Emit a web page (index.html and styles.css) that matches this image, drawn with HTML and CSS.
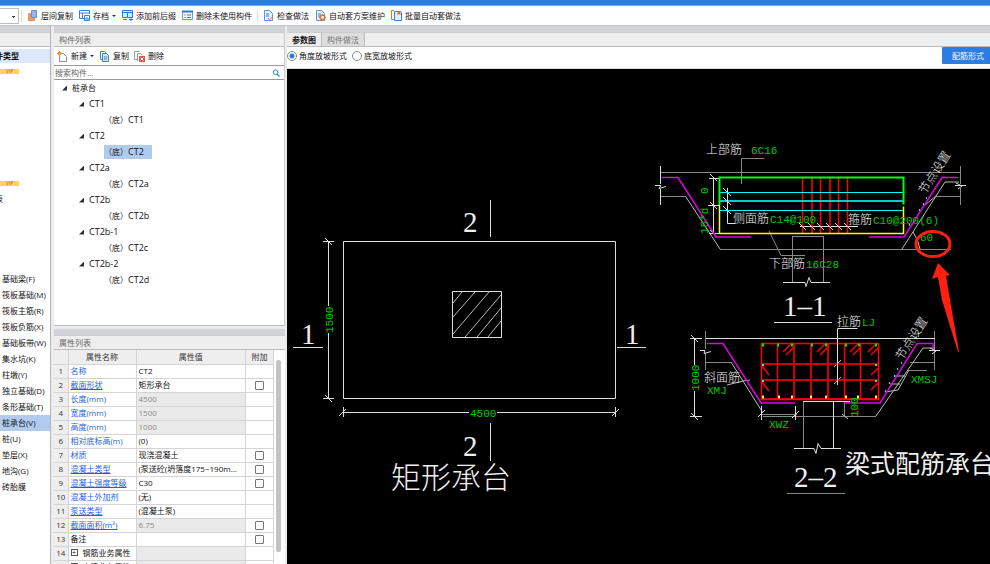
FILE: index.html
```html
<!DOCTYPE html>
<html lang="zh-CN">
<head>
<meta charset="utf-8">
<title>构件参数</title>
<link rel="stylesheet" href="styles.css">
</head>
<body>
<div class="titlebar"></div>
<header class="toolbar">
  <select class="floor" aria-label="楼层"><option></option></select>
  <span class="sep"></span>
  <button class="tool"><svg class="ico" viewBox="0 0 11 11"><path d="M4.500.5h5v7h-5z" fill="#8db9ee" stroke="#5b94d8"/><path d="M1.500 3.500h2v5h4v2h-6z" fill="#f39a5c" stroke="#f0904c"/></svg>层间复制</button>
  <button class="tool"><svg class="ico" viewBox="0 0 11 11"><path d="M5 8.500H.5v-8h10V4M.5 3h10M3.500 3v5.500" fill="none" stroke="#3a7fd0"/><path d="M5.500 5.500h5v5h-5zM7 10V8h2v2" fill="#fff" stroke="#3a7fd0"/></svg>存档<i class="caret"></i></button>
  <button class="tool"><svg class="ico" viewBox="0 0 11 11"><path d="M.5.5h10v7H.5zM.5 2.500h10M5.500 2.500v5" fill="#d6e8fc" stroke="#2f78cc"/><path d="M1 9.500h4M7 9.500h4M9 7.500v3.500" stroke="#2f78cc"/></svg>添加前后缀</button>
  <button class="tool"><svg class="ico" viewBox="0 0 11 11"><path d="M.5 1.500h10v8H.5z" fill="#e9f2fd" stroke="#6c9cd6"/><path d="M0 1.500h11" stroke="#2f78cc" stroke-width="2"/><path d="M2 5h2M2 7.500h2" stroke="#f08a3c"/><path d="M5 5h4M5 7.500h4" stroke="#3a7fd0"/></svg>删除未使用构件</button>
  <span class="sep"></span>
  <button class="tool"><svg class="ico" viewBox="0 0 11 11"><path d="M1.500.5h5l3 3v7h-8z" fill="#e4effc" stroke="#5b94d8"/><path d="M3 4h3M3 6h3" stroke="#3a7fd0"/><path d="M5 8l1.500 2L10 6" fill="none" stroke="#ec7c34"/></svg>检查做法</button>
  <button class="tool"><svg class="ico" viewBox="0 0 11 11"><path d="M1.500.5h5l3 3v7h-8z" fill="#e4effc" stroke="#5b94d8"/><path d="M3 4h3M3 6h2" stroke="#3a7fd0"/><circle cx="7.500" cy="7.500" r="2.200" fill="#fff" stroke="#ec6f24" stroke-width="1.500"/><path d="M7.500 4v1M7.500 10v1M4 7.500h1M10 7.500h1" stroke="#ec6f24"/></svg>自动套方案维护</button>
  <button class="tool"><svg class="ico" viewBox="0 0 11 11"><path d="M3 .5H.5v9H3" fill="none" stroke="#ec6f24"/><path d="M3.500 1.500h6l1 1v8h-7z" fill="#e4effc" stroke="#3a7fd0"/><path d="M6 3h4M8 1v4M6.500 1.500l3 3M9.500 1.500l-3 3" stroke="#ec6f24"/></svg>批量自动套做法</button>
</header>
<main class="work">
  <nav class="types">
    <div class="band"></div>
    <div class="head"></div>
    <div class="type-title"><span>构件类型</span></div>
    <div class="group group-a"><span class="vip">VIP</span></div>
    <div class="group group-b"><span class="vip">VIP</span></div>
    <div class="group group-c"><span class="cut">表</span></div>
    <ul class="type-list">
      <li><a href="#">基础梁(F)</a></li>
      <li><a href="#">筏板基础(M)</a></li>
      <li><a href="#">筏板主筋(R)</a></li>
      <li><a href="#">筏板负筋(X)</a></li>
      <li><a href="#">基础板带(W)</a></li>
      <li><a href="#">集水坑(K)</a></li>
      <li><a href="#">柱墩(Y)</a></li>
      <li><a href="#">独立基础(D)</a></li>
      <li><a href="#">条形基础(T)</a></li>
      <li><a href="#" class="on">桩承台(V)</a></li>
      <li><a href="#">桩(U)</a></li>
      <li><a href="#">垫层(X)</a></li>
      <li><a href="#">地沟(G)</a></li>
      <li><a href="#">砖胎膜</a></li>
    </ul>
  </nav>

  <div class="side">
    <section class="list-panel">
      <div class="band"></div>
      <h2 class="head">构件列表</h2>
      <div class="actions">
        <button class="tool"><svg class="ico" viewBox="0 0 11 11"><path d="M2.500 2.500h4l3 3v5h-7z" fill="#fff" stroke="#888"/><path d="M0 2.500h5M2.500 0v5M1 1l3 3M4 1L1 4" stroke="#f0903c"/></svg>新建<i class="caret"></i></button>
        <button class="tool"><svg class="ico" viewBox="0 0 11 11"><path d="M1.500.5h4l2 2v6h-6z" fill="#fff" stroke="#3a7fd0"/><path d="M3.500 2.500h4l2 2v6h-6z" fill="#d6e8fc" stroke="#3a7fd0"/><path d="M5 6h3M5 8h3" stroke="#3a7fd0"/></svg>复制</button>
        <button class="tool"><svg class="ico" viewBox="0 0 11 11"><path d="M3 8.500H.5v-8h5M3.500 10V2.500h3l2 2" fill="none" stroke="#999"/><path d="M5 5h6v6H5z" fill="#d8554c"/><path d="M6.500 6.500l3 3M9.500 6.500l-3 3" stroke="#fff"/></svg>删除</button>
      </div>
      <div class="search">
        <input type="text" placeholder="搜索构件..." aria-label="搜索构件">
        <button class="find" aria-label="搜索"><svg class="glass" viewBox="0 0 8 8"><circle cx="3.500" cy="3.200" r="2.300" fill="none" stroke="#2f8fc8"/><path d="M5 5l2.500 2.500" stroke="#2f8fc8" stroke-width="1.500"/></svg></button>
      </div>
      <ul class="tree">
        <li class="l1"><i class="tri"></i>桩承台</li>
        <li class="l2"><i class="tri"></i>CT1</li>
        <li class="l3"><span>（底）<b>CT1</b></span></li>
        <li class="l2"><i class="tri"></i>CT2</li>
        <li class="l3"><span class="on">（底）<b>CT2</b></span></li>
        <li class="l2"><i class="tri"></i>CT2a</li>
        <li class="l3"><span>（底）<b>CT2a</b></span></li>
        <li class="l2"><i class="tri"></i>CT2b</li>
        <li class="l3"><span>（底）<b>CT2b</b></span></li>
        <li class="l2"><i class="tri"></i>CT2b-1</li>
        <li class="l3"><span>（底）<b>CT2c</b></span></li>
        <li class="l2"><i class="tri"></i>CT2b-2</li>
        <li class="l3"><span>（底）<b>CT2d</b></span></li>
      </ul>
    </section>
    <section class="props-panel">
      <div class="band"></div>
      <h2 class="head">属性列表</h2>
      <div class="props-body">
        <table class="props">
          <thead><tr><th class="c-no"></th><th class="c-name">属性名称</th><th>属性值</th><th class="c-add">附加</th></tr></thead>
          <tbody>
            <tr><th>1</th><td class="k">名称</td><td>CT2</td><td></td></tr>
            <tr><th>2</th><td class="k u">截面形状</td><td>矩形承台</td><td class="t"><input type="checkbox" aria-label="截面形状 附加"></td></tr>
            <tr><th>3</th><td class="k">长度(mm)</td><td class="ro">4500</td><td></td></tr>
            <tr><th>4</th><td class="k">宽度(mm)</td><td class="ro">1500</td><td></td></tr>
            <tr><th>5</th><td class="k">高度(mm)</td><td class="ro">1000</td><td></td></tr>
            <tr><th>6</th><td class="k">相对底标高(m)</td><td>(0)</td><td></td></tr>
            <tr><th>7</th><td class="k">材质</td><td>现浇混凝土</td><td class="t"><input type="checkbox" aria-label="材质 附加"></td></tr>
            <tr><th>8</th><td class="k u">混凝土类型</td><td>(泵送砼(坍落度175~190m...</td><td class="t"><input type="checkbox" aria-label="混凝土类型 附加"></td></tr>
            <tr><th>9</th><td class="k u">混凝土强度等级</td><td>C30</td><td class="t"><input type="checkbox" aria-label="混凝土强度等级 附加"></td></tr>
            <tr><th>10</th><td class="k">混凝土外加剂</td><td>(无)</td><td></td></tr>
            <tr><th>11</th><td class="k u">泵送类型</td><td>(混凝土泵)</td><td></td></tr>
            <tr><th>12</th><td class="k u">截面面积(m²)</td><td class="ro">6.75</td><td class="t"><input type="checkbox" aria-label="截面面积 附加"></td></tr>
            <tr><th>13</th><td>备注</td><td></td><td class="t"><input type="checkbox" aria-label="备注 附加"></td></tr>
            <tr><th>14</th><td><button class="plus">+</button>钢筋业务属性</td><td class="ro"></td><td></td></tr>
            <tr><th>15</th><td><button class="plus">+</button>土建业务属性</td><td class="ro"></td><td></td></tr>
          </tbody>
        </table>
        <div class="track"><div class="thumb"></div></div>
      </div>
    </section>
  </div>

  <section class="view">
    <div class="band"></div>
    <div class="head tabs"><button class="tab on">参数图</button><button class="tab">构件做法</button></div>
    <div class="options">
      <label><input type="radio" name="slope" checked>角度放坡形式</label>
      <label><input type="radio" name="slope">底宽放坡形式</label>
      <button class="primary">配筋形式</button>
    </div>
    <div class="canvas">
      <svg viewBox="287 69 703 495" preserveAspectRatio="xMinYMin slice">
        <!-- plan -->
        <g class="ln w">
          <path d="M343.500 241.500h272v157h-272zM452.500 291.500h49v46h-49z"/>
          <path d="M328.500 241v65M328.500 333v65M323 241.500h11M323 398.500h11M325 238l7 7M325 395l7 7"/>
          <path d="M343 412.500h126M497 412.500h118M343.500 407v10M615.500 407v10M339 416l7-7M612 416l7-7"/>
          <path d="M490.500 200v37M490.500 423v38M293 347.500h30M617 347.500h29"/>
          <path class="fine" d="M453 303l9-11M453 317l22-25M453 334l36-42M465 337l36-42M477 337l24-29M488 337l13-16"/>
        </g>
        <g class="num">
          <text x="463" y="232">2</text><text x="463" y="456">2</text>
          <text x="301" y="344">1</text><text x="625" y="344">1</text>
          <text x="783" y="316">1–1</text><text x="794" y="487">2–2</text>
        </g>
        <text class="big" x="391" y="488">矩形承台</text>
        <text class="mid" x="845" y="473">梁式配筋承台</text>

        <!-- section 1-1 -->
        <g class="ln g">
          <path d="M660 172.500h300M661 196.500h25M720 249.500h231M936 196.500h25M792 236.500h31M823.500 236v46M792.500 236v46"/>
          <path d="M960.500 166v18M960.500 188v17M741.500 184v-25.500h23M769 231l12 24.500h24"/>
        </g>
        <g class="ln w">
          <path d="M660.500 166v18M660.500 189v16M655 185.500h6l-2 3 7-2M955 185.500h11M956 183l6 3-4 3"/>
          <path class="fine" d="M686 197l34 52M902 249l43-67h14M925 205l11-9M913 232q5 7 7 17"/>
          <path d="M713.500 177v57M709 178.500h10M708 205.500h12M709 233.500h10M710 174l7 7M710 202l7 7M710 230l7 7"/>
          <path d="M783 282.500h22l1 4 3-9 2 5h19M774 322.500h58M800 226.500h58"/>
        </g>
        <g class="ln r"><path d="M802.500 178v55M820.500 178v55M838.500 178v55M847.500 178v55"/><path class="thick" d="M812 178v55M830 178v55"/></g>
        <g class="ln c"><path d="M720 192.500h184M720 210.500h184"/><path class="thick" d="M720 201h184"/></g>
        <path class="ln lime" d="M719.500 205v-27.500h184v27"/>
        <path class="ln yel" d="M719.500 206v27.500h184v-27"/>
        <path class="ln m" d="M662 177.500h16l38 59.500h35M869 237h35l38-59.500h16"/>
        <g class="ln w"><path d="M727.500 188v35.500h8M723 188l8 8M723 197l8 8M723 206l8 8M799 223l7 7M808 223l7 7M817 223l7 7M826 223l7 7M835 223l7 7M844 223l7 7"/></g>
        <path class="dots-c" d="M926 198h1M923 204h1M919 210h1M909 225h1"/>
        <g class="lab">
          <text x="706" y="154">上部筋</text><text x="733" y="223">侧面筋</text><text x="848" y="224">箍筋</text><text x="769" y="268">下部筋</text>
          <text transform="translate(925 195) rotate(-57)">节点设置</text>
        </g>
        <g class="dim">
          <text x="751" y="154">6C16</text><text x="770" y="223">C14@100</text><text x="873" y="224">C10@200(6)</text><text x="806" y="268">16C28</text><text x="920" y="241">60</text>
          <text transform="translate(708 194) rotate(-90)">0</text>
          <text transform="translate(708 234) rotate(-90)">15*d</text>
          <text transform="translate(333 333) rotate(-90)">1500</text><text x="470" y="417">4500</text>
        </g>

        <!-- section 2-2 -->
        <g class="ln g">
          <path d="M705.500 331v18M705.500 353v17M706 362.500h25M763 416.500h113M762 414.500h35M934.500 331v39M910 362.500h24M909 370.500h18M787 493.500h58M803.500 402v46M844.500 402v15"/>
        </g>
        <g class="ln w">
          <path d="M706 338.500h229M690 338.500h12M690 416.500h12M694.500 338v27M694.500 391v26M691 335l7 7M691 413l7 7"/>
          <path d="M700 350.500h5l-1 3 7-2M929 350.500h11M930 348l6 3-4 3"/>
          <path class="fine" d="M731 362l32 51M876 416l47-68h12M727 385l16-4 7-1M909 370l-11 20-13 2M905 376h-10M900 384h-10"/>
          <path d="M761.500 406v14M795.500 406v14M758 417l7-7M792 418l7-7M803 401.500h47M833.500 402v46M794 448.500h20l2 5 2-10 3 5h20"/>
          <path class="fine" d="M834 367l7-7M834 384l7-7M842 414l6 5"/>
        </g>
        <g class="ln r">
          <path d="M761.500 343.500h117v56h-117zM777.500 344v56M844.500 344v56M860.500 344v56"/>
          <path class="thick" d="M794 344v56M811 344v56M828 344v56M761 399h118M761 380h118M761 364h118"/>
          <path class="hook" d="M783 352l8-8M786 355l8-8M817 352l8-8M820 355l8-8M850 352l8-8M853 355l8-8M868 352l8-8M871 355l8-8M762 366l7 9M762 382l7 9M878 368l-7 7M878 383l-7 7"/>
        </g>
        <path class="ln w" d="M837.500 385v-56.500h20"/>
        <path class="ln m" d="M707 343.500h16l38 59.500h34M844 403h36l37-59.500h16v5"/>
        <path class="dots-g" d="M762 345h2M777 345h2M791 345h2M811 345h2M825 345h2M845 345h2M858 345h2M875 345h2"/>
        <path class="dots-y" d="M762 397h2M778 397h2M791 397h2M810 397h2M825 397h2M845 397h2M857 397h2M875 397h2"/>
        <path class="dots-c" d="M762 365h2M762 381h2M875 365h2M875 381h2M901 363h1M897 369h1M894 376h1M889 383h1M885 391h1"/>
        <g class="lab">
          <text x="704" y="382">斜面筋</text><text x="837" y="326">拉筋</text>
          <text transform="translate(902 361) rotate(-57)">节点设置</text>
        </g>
        <g class="dim">
          <text x="707" y="394">XMJ</text><text x="862" y="326">LJ</text><text x="911" y="383">XMSJ</text><text x="769" y="428">XWZ</text>
          <text transform="translate(699 391) rotate(-90)">1000</text>
          <text transform="translate(858 417) rotate(-90)">100</text>
        </g>

        <!-- callout -->
        <ellipse class="ring" cx="933" cy="244" rx="17" ry="12.500"/>
        <path class="arrow" d="M938 263L950 275 946 276 950 300 959 352H958L942 300 938 277 932 279Z"/>
      </svg>
    </div>
  </section>
</main>
</body>
</html>
```
FILE: styles.css
```css
* { box-sizing: border-box; }
html, body { height: 100%; }
body {
  margin: 0;
  display: flex;
  flex-direction: column;
  overflow: hidden;
  background: #fff;
  color: #111;
  font: 8px/16px "Open Sans", "Noto Sans CJK SC", sans-serif;
}
button, input, select { font: inherit; color: inherit; margin: 0; }
button { border: 0; background: none; padding: 0; }
ul { list-style: none; margin: 0; padding: 0; }
a { color: inherit; text-decoration: none; }

.titlebar { flex: none; height: 6px; background: #2b7de1; border-bottom: 1px solid #73a8ea; }
.toolbar {
  flex: none;
  height: 20px;
  display: flex;
  align-items: center;
  border-bottom: 1px solid #c3c4ca;
}
.floor {
  width: 19px;
  height: 16px;
  border: 1px solid #bbb;
  border-left: 0;
  appearance: none;
  background: linear-gradient(#444, #444) 12px 7px / 3px 1px no-repeat, linear-gradient(#444, #444) 13px 8px / 1px 1px no-repeat, #fff;
}
.sep { width: 1px; height: 12px; background: #ddd; margin: 0 2px; }
.tool { display: flex; align-items: center; gap: 3px; padding: 0 3px; white-space: nowrap; }
.ico { width: 11px; height: 11px; flex: none; }
.caret { width: 4px; border: 2px solid transparent; border-top-color: #333; border-bottom: 0; }

.work { flex: 1; min-height: 0; display: flex; background: #ececef; }
.band { flex: none; height: 6px; background: #d3d4da; }
.head {
  flex: none;
  height: 15px;
  margin: 0;
  padding-left: 5px;
  background: #eee;
  border-top: 1px solid #ccc;
  border-bottom: 1px solid #bbb;
  color: #666;
  font-size: 8px;
  font-weight: 400;
  line-height: 14px;
}

.types { flex: none; width: 51px; background: #fff; border-right: 1px solid #b5b5b5; overflow: hidden; white-space: nowrap; }
.type-title { height: 14px; margin-top: 2px; line-height: 14px; background: #dde8f8; font-weight: 700; }
.type-title span { margin-left: -13px; }
.group-a { height: 114px; padding-top: 6px; }
.group-b { height: 14px; padding-top: 4px; }
.group-c { height: 80px; }
.vip { display: block; width: 19px; height: 5px; background: #ffd555; color: #a07010; font-size: 5px; line-height: 5px; text-align: center; }
.cut { margin-left: -5px; }
.type-list a { display: block; padding-left: 2px; }
.type-list .on { background: #b0cbee; }

.side { flex: none; width: 231px; margin-left: 3px; display: flex; flex-direction: column; }
.list-panel { flex: none; background: #fff; border-right: 1px solid #ccc; border-bottom: 1px solid #bbb; }
.actions { display: flex; height: 18px; align-items: center; }
.actions .tool { padding-right: 2px; }
.search { display: flex; height: 15px; border-top: 1px solid #999; border-bottom: 1px solid #999; }
.search input { flex: 1; min-width: 0; border: 0; padding: 0 1px; outline: 0; }
.search input::placeholder { color: #666; opacity: 1; }
.find { width: 16px; display: flex; align-items: center; justify-content: center; }
.glass { width: 8px; height: 8px; }
.tree { height: 245px; }
.tree li { display: flex; height: 16px; align-items: center; }
.tree b { font-size: 9px; font-weight: 400; }
.tri { width: 5px; height: 5px; margin-right: 5px; background: #333; clip-path: polygon(100% 0, 100% 100%, 0 100%); }
.l1 { padding-left: 8px; }
.l2 { padding-left: 25px; font-size: 9px; }
.l3 { padding-left: 50px; }
.tree span { height: 14px; line-height: 14px; padding-right: 8px; }
.tree .on { background: #b0cbee; }

.props-panel { flex: 1; min-height: 0; margin-top: 3px; display: flex; flex-direction: column; background: #fff; overflow: hidden; }
.props-body { display: flex; flex: 1; min-height: 0; }
.props { flex: 1; height: max-content; table-layout: fixed; border-collapse: collapse; line-height: 12px; }
.props th, .props td { height: 14px; padding: 0 0 0 2px; border: 1px solid #d4d4d4; border-left: 0; border-top: 0; white-space: nowrap; overflow: hidden; text-align: left; }
.props th { background: #eee; font-weight: 400; text-align: center; padding: 0; color: #333; }
.props .c-no { width: 14px; }
.props .c-name { width: 68px; }
.props .c-add { width: 28px; }
.props .k { color: #1e5fe6; }
.props .u { text-decoration: underline; }
.props .ro { background: #eaeaea; color: #888; }
.props .t { text-align: center; padding: 0; }
.t input { appearance: none; display: block; width: 9px; height: 9px; margin: 0 auto; border: 1px solid #777; border-radius: 1px; background: #fff; }
.plus { width: 7px; height: 7px; margin-right: 5px; border: 1px solid #555; line-height: 5px; font-size: 7px; vertical-align: 1px; }
.track { width: 11px; padding: 10px 4px 0 2px; }
.thumb { height: calc(100% - 12px); border-radius: 3px; background: #c3c3c3; }

.view { flex: 1; min-width: 0; margin-left: 2px; display: flex; flex-direction: column; background: #fff; }
.tabs { display: flex; padding: 0; }
.tab { padding: 0 5px; border-right: 1px solid #bbb; background: #ddd; color: #777; line-height: 13px; }
.tab.on { background: #eee; color: #111; font-weight: 700; }
.options { flex: none; display: flex; height: 22px; align-items: flex-start; gap: 5px; border-bottom: 1px solid #ddd; }
.options label { display: flex; align-items: center; gap: 2px; height: 17px; }
.options input { appearance: none; width: 10px; height: 10px; border: 1px solid #888; border-radius: 50%; background: #fff; }
.options input:checked { background: radial-gradient(circle, #2b7de1 2px, #fff 3px); }
.primary { width: 48px; height: 17px; margin-left: auto; padding-left: 4px; background: #2b7de1; color: #fff; border-radius: 1px 0 0 1px; }
.canvas { flex: 1; min-height: 0; background: #000; }
.canvas svg { display: block; width: 100%; height: 100%; }

.ln { fill: none; stroke-width: 1; }
.w { stroke: #ddd; }
.g { stroke: #888; }
.r { stroke: #f00; stroke-width: 1.5; }
.c { stroke: #0ff; }
.m { stroke: #e000e0; stroke-width: 1.5; }
.lime { stroke: #0f0; stroke-width: 2; }
.yel { stroke: #ff0; stroke-width: 1.5; }
.thick { stroke-width: 2; opacity: .8; }
.fine { stroke: #bbb; }
.dots-c, .dots-g, .dots-y { fill: none; stroke-width: 2; stroke: #0ee; }
.dots-g { stroke: #0e0; stroke-width: 3; }
.dots-y { stroke: #ff0; stroke-width: 3; }
.canvas text { fill: #eee; }
.canvas .num text { font: 29px "Liberation Serif", serif; }
.canvas .big { font: 30px "Noto Sans CJK SC", sans-serif; font-weight: 300; }
.canvas .mid { font: 25px "Noto Sans CJK SC", sans-serif; }
.canvas .lab text { font: 12px "Noto Sans CJK SC", sans-serif; font-weight: 300; }
.canvas .dim text { font: 11px "Liberation Mono", monospace; fill: #00c800; }
.ring { fill: none; stroke: #ff2010; stroke-width: 3; }
.arrow { fill: #ff2010; }
```
